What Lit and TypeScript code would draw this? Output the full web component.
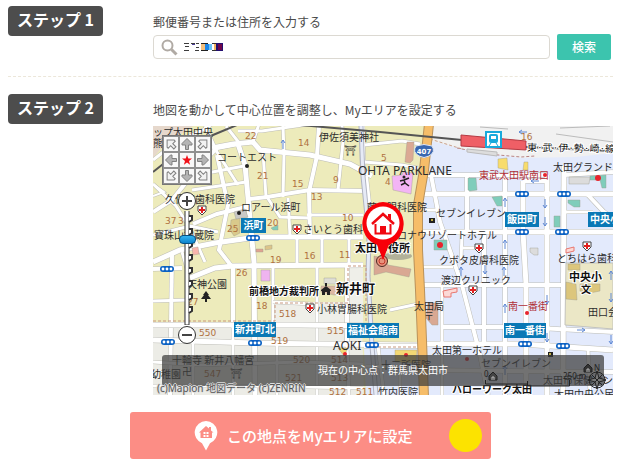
import { LitElement, html, svg, css } from "lit";
import { customElement, state } from "lit/decorators.js";

type Road = [string, number];
type Label = [string, number, number, string];

const YELLOW_ROADS: Road[] = [
  ["153,160 176,142 205,129 212,124", 3],
  ["153,212 172,200 200,165 217,148 238,144", 4],
  ["153,184 176,206 190,228 205,262", 3],
  ["153,196 164,192 153,184", 2],
  ["205,126 217,152 238,185", 3],
  ["226,126 240,144", 3],
  ["212,148 233,144 253,142 260,150 310,155 350,164 372,176", 5],
  ["253,142 259,124", 3],
  ["238,131 262,131 310,124", 3],
  ["238,144 245,165 250,219 254,262 255,395", 5],
  ["263,152 266,197", 3],
  ["250,199 267,197 310,190 367,191", 4],
  ["267,197 280,217 310,218", 3],
  ["283,126 284,155 283,197", 3],
  ["288,198 290,236", 3],
  ["193,224 217,214 250,206", 4],
  ["217,155 228,205 219,250 233,268 233,328", 4],
  ["202,174 244,166", 3],
  ["192,190 246,182", 3],
  ["153,262 180,250 215,243 257,237 310,237 363,237", 5],
  ["153,235 190,226 218,232", 3],
  ["153,269 182,268", 4],
  ["190,278 215,268 233,266 363,265", 5],
  ["182,252 188,272 186,322", 3],
  ["273,265 273,322", 3],
  ["297,237 297,265", 3],
  ["322,237 322,265", 3],
  ["349,237 349,265", 3],
  ["319,126 317,156 309,192 310,237", 4],
  ["317,265 317,395", 3],
  ["342,126 343,142 338,190", 3],
  ["307,215 363,215", 3],
  ["362,126 363,172", 5],
  ["364,145 402,141 420,144", 3],
  ["364,162 402,165 418,168", 3],
  ["366,176 372,230", 4],
  ["347,265 347,346", 4],
  ["153,301 188,300", 3],
  ["172,255 170,395", 4],
  ["390,310 418,304", 3],
];

const GRAY_ROADS: Road[] = [
  ["153,325 234,325 300,325 383,326", 5],
  ["153,340 255,343 320,344 420,345", 5],
  ["153,362 200,365 300,362 363,364", 3],
  ["153,386 250,386 363,388", 3],
  ["193,342 193,395", 3],
  ["233,325 233,395", 3],
  ["273,302 313,304", 3],
  ["277,345 277,395", 3],
  ["347,346 349,395", 3],
  ["372,346 380,395", 3],
];

const BLUE_ROADS: Road[] = [
  ["423,175 547,175", 4],
  ["564,175 613,172", 4],
  ["422,194 613,194", 5],
  ["418,232 613,232", 5],
  ["425,210 440,210", 3],
  ["423,267 453,267", 3],
  ["423,285 565,285", 4],
  ["442,327 520,327 613,332", 4],
  ["423,344 520,344 613,350", 5],
  ["424,370 613,372", 4],
  ["431,175 440,222 462,285 480,355 488,395", 4],
  ["442,285 442,395", 3],
  ["467,175 467,232", 4],
  ["462,232 461,262", 3],
  ["462,248 483,248", 3],
  ["484,232 484,344", 4],
  ["505,175 505,395", 4],
  ["523,181 523,232 526,284 526,395", 5],
  ["523,181 545,181", 4],
  ["547,175 547,395", 5],
  ["564,165 563,395", 5],
  ["587,194 604,212 613,218", 4],
  ["566,212 593,212", 3],
  ["588,348 590,395", 3],
];

const LABELS: Label[] = [
  ["ップ太田中央", 153, 136, "name"],
  ["熊", 153, 147, "name"],
  ["コートエスト", 217, 161, "name"],
  ["久保田歯科医院", 165, 203, "name"],
  ["ロアール浜町", 241, 211, "name"],
  ["寶珠山地蔵院", 154, 239, "name"],
  ["さいとう歯科", 303, 233, "name"],
  ["伊佐須美神社", 319, 141, "name"],
  ["⛩", 344, 154, "name"],
  ["OHTA PARKLANE", 358, 175, "latin"],
  ["藤川眼科医院", 367, 211, "name"],
  ["セブンイレブン", 436, 217, "name"],
  ["ロナウリゾートホテル", 397, 239, "name"],
  ["太田市役所", 355, 252, "hall"],
  ["クボタ皮膚科医院", 439, 264, "name"],
  ["太田グランド", 553, 171, "name"],
  ["東武太田駅南口", 479, 179, "red"],
  ["とちはら歯科", 557, 262, "name"],
  ["天神公園", 187, 288, "name"],
  ["前橋地方裁判所", 249, 295, "strong"],
  ["新井町", 336, 293, "town"],
  ["小林胃腸科医院", 317, 313, "name"],
  ["AOKI", 333, 350, "latin"],
  ["太田局", 414, 310, "name"],
  ["〒", 424, 320, "name"],
  ["渡辺クリニック", 441, 284, "name"],
  ["太田第一ホテル", 432, 354, "name"],
  ["南一番街", 508, 310, "red"],
  ["中央小", 569, 281, "hall"],
  ["文", 581, 293, "strong"],
  ["田口会", 588, 316, "name"],
  ["十輪寺 新井八幡宮", 172, 364, "name"],
  ["幼稚園", 151, 378, "name"],
  ["卍", 182, 375, "name"],
  ["⛩", 230, 377, "name"],
  ["十二所医院", 381, 369, "name"],
  ["竹内医院", 378, 396, "name"],
  ["ハローワーク太田", 452, 393, "strong"],
  ["セブンイレブン", 481, 367, "name"],
  ["太田市保健セン", 543, 384, "name"],
  ["太田中央公民", 554, 398, "name"],
  ["22", 245, 139, "lot"],
  ["14", 298, 146, "lot"],
  ["21", 257, 179, "lot"],
  ["15", 292, 187, "lot"],
  ["37", 165, 224, "lot"],
  ["3", 178, 224, "lot"],
  ["25", 227, 232, "lot"],
  ["20", 267, 226, "lot"],
  ["19", 270, 263, "lot"],
  ["16", 304, 259, "lot"],
  ["11", 339, 258, "lot"],
  ["5", 381, 161, "lot"],
  ["9", 333, 183, "lot"],
  ["4", 385, 185, "lot"],
  ["13", 311, 200, "lot"],
  ["10", 342, 221, "lot"],
  ["26", 236, 276, "lot"],
  ["27", 187, 305, "lot"],
  ["18", 256, 309, "lot"],
  ["518", 279, 317, "lot"],
  ["550", 199, 336, "lot"],
  ["519", 271, 344, "lot"],
  ["515", 327, 334, "lot"],
  ["547", 204, 377, "lot"],
  ["520", 293, 363, "lot"],
  ["521", 285, 381, "lot"],
  ["514", 331, 363, "lot"],
  ["513", 331, 381, "lot"],
  ["512", 329, 395, "lot"],
  ["511", 356, 395, "lot"],
  ["16", 521, 140, "lot"],
];

const SIGNS: [string, number, number, number][] = [
  ["浜町", 241, 218, 25],
  ["飯田町", 505, 212, 34],
  ["中央小", 588, 212, 34],
  ["新井町北", 234, 322, 42],
  ["福祉会館南", 347, 323, 52],
  ["南一番街", 504, 323, 42],
];

const SIGNALS: [number, number][] = [
  [253, 238], [522, 194], [564, 194], [522, 232], [562, 232], [167, 269],
  [168, 342], [255, 343], [372, 345], [525, 344], [563, 346],
];

const CLINICS: [number, number][] = [
  [202, 210], [297, 229], [479, 248], [587, 246], [310, 308], [473, 290],
];

const BUILDINGS: [string, string][] = [
  ["392,176 402,175 403,172 413,173 411,194 393,190", "#f3b5f5"],
  ["407,142 414,142 413,160 410,163 405,162", "#dba994"],
  ["261,270 270,270 270,281 261,281", "#efb4f0"],
  ["374,256 384,258 388,265 411,269 409,277 386,272 374,275", "#d9a893"],
  ["428,303 438,303 438,325 432,325 426,318", "#d9a893"],
  ["395,350 417,350 416,363 395,362", "#f3d874"],
  ["338,348 348,348 344,356", "#f3d874"],
  ["468,178 476,178 477,190 470,191 468,190", "#7fcdbb"],
  ["492,197 502,196 502,206 497,206", "#7fcdbb"],
  ["568,200 580,200 580,207 574,207 568,203", "#7fcdbb"],
  ["554,216 560,216 560,227 554,227", "#7fcdbb"],
  ["590,176 606,175 606,188 602,188 600,180 590,180", "#7fcdbb"],
  ["434,240 447,240 447,250 434,250", "#7fcdbb"],
  ["271,228 278,225 278,230 273,230", "#7fcdbb"],
  ["498,159 507,158 508,170 498,168", "#f8dc6c"],
  ["524,162 528,162 528,170 523,170", "#f8dc6c"],
  ["568,264 580,264 580,270 568,270", "#dcc67c"],
  ["566,282 576,284 577,300 566,299", "#dcc67c"],
  ["580,284 600,284 600,291 590,293 580,291", "#dcc67c"],
  ["231,220 240,218 240,233 234,236 230,230", "#d9c98b"],
  ["234,212 245,209 248,217 236,219", "#c9c9c6"],
  ["569,177 590,177 589,184 569,184", "#dcdcdc"],
  ["530,248 538,248 538,255 534,255 530,252", "#dcdcdc"],
  ["324,278 336,278 336,284 324,284", "#deddd5"],
  ["321,286 345,286 345,293 334,295 321,292", "#ddb8a2"],
  ["192,248 198,247 199,254 193,255", "#f8b5ac"],
  ["256,249 263,249 263,252 256,252", "#e0a390"],
  ["265,246 272,245 272,249 265,250", "#dcc58a"],
];

const FLOW_ARROWS: [number, number, number][] = [
  [505, 202, 1], [505, 244, 1], [545, 204, -1], [545, 222, -1], [283, 144, 1],
  [505, 308, 1], [547, 300, -1], [504, 271, 1], [485, 270, -1], [547, 338, -1],
  [611, 275, 1], [611, 298, -1], [611, 340, -1], [461, 271, 1], [505, 370, 1],
];

const roads = (list: Road[]) => svg`
  ${list.map(([p, w]) => svg`<polyline points=${p} fill="none" stroke="#bdbdb6" stroke-width=${w + 1}/>`)}
  ${list.map(([p, w]) => svg`<polyline points=${p} fill="none" stroke="#fff" stroke-width=${w}/>`)}`;

const mapDrawing = html`
  <svg class="map-drawing" viewBox="153 126 460 269" role="img" aria-label="地図">
    <rect x="153" y="126" width="460" height="269" fill="#edebbb"/>
    <path d="M153 126h40l-30 20-10 12z" fill="#e6d8cc"/>
    <path d="M153 322h209l2 73H153z" fill="#ecece6"/>
    <path d="M273 302h90v22h-90zM348 266h15v60h-15z" fill="#efefe9"/>
    ${roads(YELLOW_ROADS)}
    ${roads(GRAY_ROADS)}
    <path d="M430 126H613V395H423L419 262z" fill="#e3eafc"/>
    <path d="M364 348h58v47h-56z" fill="#e3eafc"/>
    <path d="M430 126H613V153L575 157 520 158 466 150 428 140z" fill="#f1f1f1"/>
    ${roads(BLUE_ROADS)}
    ${roads([["364,346 422,346", 4], ["366,366 420,368", 3], ["378,346 384,395", 3], ["400,366 400,395", 3]])}
    <path d="M566 263h47v66l-48-4z" fill="#ebe7c6" stroke="#c3c3bd"/>
    <path d="M361 126l2 50 6 60-1 40 4 70 4 49" fill="none" stroke="#b0b4c2" stroke-width="5"/>
    <path d="M361 126l2 50 6 60-1 40 4 70 4 49" fill="none" stroke="#e6eaf6" stroke-width="3"/>
    <path d="M153 321H275V303h73V266h18v60M378 347h42" fill="none" stroke="#c9987f" stroke-dasharray="3 2"/>
    <path d="M457 148l30 6 34 3 14-1" fill="none" stroke="#b98484" stroke-dasharray="3 2"/>
    <path d="M430 139l32 10" fill="none" stroke="#c9a08a" stroke-dasharray="3 2"/>
    ${BUILDINGS.map(([p, c]) => svg`<polygon points=${p} fill=${c} stroke="#9a9a8c" stroke-opacity=".4"/>`)}
    <path d="M429 124L424 170 418 205 418 250 420 290 422 340 424 397" fill="none" stroke="#b9925c" stroke-width="10"/>
    <path d="M429 124L424 170 418 205 418 250 420 290 422 340 424 397" fill="none" stroke="#f6bd69" stroke-width="8"/>
    <path d="M153 172L177 153 213 135 237 125M300 125L380 132 462 140" fill="none" stroke="#555" stroke-width="2"/>
    <path d="M526 147L613 151" fill="none" stroke="#555" stroke-width="2"/>
    <path d="M461 135L526 141V150L461 146z" fill="#ef5f66" stroke="#b33a42"/>
    <path d="M467 149l30 3v4l-30-4zM560 128l50-2M556 134l57 8M480 127l28 2" fill="#ddd" stroke="#bbb"/>
    <g>
      <rect x="486" y="132" width="15" height="15" fill="#fff" stroke="#19a9db" stroke-width="2"/>
      <rect x="489" y="134" width="9" height="9" rx="2" fill="#19a9db"/>
      <path d="M491 136h5v3h-5z" fill="#fff"/>
      <path d="M491 143l-2 3M496 143l2 3" stroke="#19a9db"/>
    </g>
    ${FLOW_ARROWS.map(([x, y, d]) => svg`<path d=${`M${x} ${y + 5 * d}V${y - 4 * d}M${x - 2} ${y - d}L${x} ${y - 4 * d}L${x + 2} ${y - d}`} fill="none" stroke="#5f88d4"/>`)}
    <path d="M539 181h-8m3-2l-3 2 3 2M577 330h8m-3-2l3 2-3 2M527 132h-8m3-2l-3 2 3 2" fill="none" stroke="#5f88d4"/>
    <path d="M443 291l14-3v4l-6 1v4h-7z" fill="#fbd9d6" stroke="#e8776f"/>
    <path d="M566 249l8-2v4l-8 2z" fill="#fbd9d6" stroke="#e8776f"/>
    <ellipse cx="398" cy="256" rx="14" ry="4" fill="#777" opacity=".5"/>
    ${LABELS.map(([t, x, y, c]) => svg`<text class=${c} x=${x} y=${y}>${t}</text>`)}
    <text class="line-name" x="527" y="151" transform="rotate(1 527 151)">東·武·伊·勢·崎·線</text>
    ${SIGNS.map(([t, x, y, w]) => svg`
      <rect x=${x} y=${y} width=${w} height="15" fill="#0a78b5"/>
      <text class="sign" x=${x + w / 2} y=${y + 11}>${t}</text>`)}
    ${SIGNALS.map(([x, y]) => svg`
      <rect x=${x - 7} y=${y - 3} width="14" height="6" rx="3" fill="#0b62c4"/>
      ${[-4, 0, 4].map((d) => svg`<circle cx=${x + d} cy=${y} r="1.4" fill="#fff"/>`)}`)}
    ${CLINICS.map(([x, y]) => svg`
      <path d=${`M${x - 4} ${y - 4}h8v5l-4 4-4-4z`} fill="#fff" stroke="#444"/>
      <path d=${`M${x - 3} ${y}h6M${x} ${y - 3}v6`} stroke="#e02020" stroke-width="2"/>`)}
    <g>
      <path d="M416 146q8-3 16 0 4 6-3 10-5 3-10 0-7-4-3-10z" fill="#3a68b0" stroke="#dfe6f4"/>
      <text class="route" x="424" y="154">407</text>
    </g>
    <g fill="#222">
      <circle cx="247" cy="166" r="2"/><circle cx="239" cy="213" r="2"/>
      <path d="M206 291l3 4h-1l3 4h-4v3h-2v-3h-4l3-4h-1z"/>
      <path d="M321 290l5-4 5 4v1h-1v4h-3v-3h-2v3h-3v-4h-1zM325 283h2v3h-2z"/>
      <circle cx="404" cy="177" r="1.5"/>
      <path d="M400 181l4-1 5-2M404 180l1 3 4 3M405 183l-4 2" fill="none" stroke="#222" stroke-width="1.5"/>
      <path d="M429 218h6v5h-6zM548 352h5v5h-5z"/>
    </g>
    <g fill="#f6df55"><circle cx="432" cy="220" r="1"/><circle cx="550" cy="354" r="1"/></g>
    <g fill="#e8242c">
      <circle cx="440" cy="245" r="3"/><circle cx="598" cy="178" r="3"/><circle cx="545" cy="175" r="2"/>
      <circle cx="345" cy="354" r="2"/><circle cx="406" cy="355" r="2"/><circle cx="527" cy="313" r="2"/>
      <circle cx="467" cy="359" r="2"/>
    </g>
    <circle cx="382" cy="261" r="5.500" fill="#e8927c" stroke="#4a2a24"/>
    <circle cx="382" cy="261" r="3" fill="none" stroke="#c2372a"/>
  </svg>`;

const ARROW_TURNS = [-45, 0, 45, -90, null, 90, -135, 180, 135];
const ARROW_NAMES = ["北西", "北", "北東", "西", "中心", "東", "南西", "南", "南東"];

@customElement("app-root")
export class AppRoot extends LitElement {
  @state() private zoom = 77;

  static styles = css`
    :host {
      display: block;
      padding: 6px 12px 8px 8px;
      background: #fff;
      color: #4a4a4a;
      font: 12px/16px "Noto Sans CJK JP", "Noto Sans", sans-serif;
    }
    * { box-sizing: border-box; }
    button, input { font: inherit; margin: 0; }
    button { border: 0; padding: 0; cursor: pointer; }
    .step { display: grid; grid-template-columns: 95px minmax(0, 1fr); column-gap: 50px; align-items: start; }
    .step + .step { margin-top: 17px; }
    .first { padding-bottom: 16px; border-bottom: 1px dashed #ece7da; }
    .badge {
      margin: 0; height: 30px; border-radius: 4px; background: #4d4d4d; color: #fff;
      font-size: 16px; line-height: 27px; font-weight: 700; text-align: center;
    }
    .body { display: flex; flex-direction: column; padding-top: 8px; }
    .caption { display: block; margin: 0; }
    .search { display: flex; align-items: center; gap: 7px; margin-top: 4px; padding-right: 2px; }
    .field {
      display: flex; flex: 1; align-items: center; gap: 6px; height: 24px; padding: 0 7px;
      border: 1px solid #dcd9d2; border-radius: 4px;
    }
    .field svg { flex: none; }
    .field input { flex: 1; min-width: 0; border: 0; outline: 0; background: none; }
    .submit {
      width: 54px; height: 26px; border-radius: 2px; background: #3cc4ae; color: #fff;
      line-height: 24px; font-weight: 500;
    }
    .map { position: relative; overflow: hidden; margin-top: 8px; }
    .map-drawing { display: block; width: 100%; }
    .map-drawing text { fill: #2c2c2c; font-size: 10px; }
    .map-drawing .latin { font-family: "Noto Sans", sans-serif; font-size: 12px; }
    .map-drawing .strong, .map-drawing .hall, .map-drawing .town, .map-drawing .line-name {
      fill: #111; font-weight: 700; stroke: #fff; stroke-width: 2px; paint-order: stroke;
    }
    .map-drawing .line-name { font-weight: 400; }
    .map-drawing .hall { font-size: 11px; }
    .map-drawing .town { font-size: 13px; }
    .map-drawing .red { fill: #b03038; }
    .map-drawing .lot { fill: #b0713f; font: 9px "DejaVu Sans", sans-serif; }
    .map-drawing .sign { fill: #fff; font-weight: 700; text-anchor: middle; }
    .map-drawing .route { fill: #fff; font: bold 7px "DejaVu Sans", sans-serif; text-anchor: middle; }
    .pan {
      position: absolute; left: 9px; top: 9px; display: grid;
      grid-template-columns: repeat(3, 16px); grid-auto-rows: 16px;
      border: 1px solid #777; background: #777;
    }
    .pan button { display: grid; place-items: center; border: 1px solid #909090; background: #f8f8f8; }
    .zoomer { position: absolute; left: 24px; top: 65px; display: flex; flex-direction: column; align-items: center; }
    .zoomer button { width: 20px; height: 20px; border-radius: 50%; background: none; }
    .zoomer svg { display: block; }
    .track { position: relative; width: 20px; height: 114px; }
    .track input {
      position: absolute; inset: 0; width: 20px; height: 114px; appearance: none;
      writing-mode: vertical-lr; direction: rtl; background: none;
    }
    .track input::-webkit-slider-thumb {
      appearance: none; width: 17px; height: 9px; border: 1px solid #064f80; border-radius: 4px;
      background: linear-gradient(#35b4f0, #0d83cc);
    }
    .pin { position: absolute; left: 50%; top: 75px; margin-left: -22px; }
    .center-point {
      position: absolute; left: 9px; right: 9px; bottom: 9px; height: 31px; border-radius: 3px; margin: 0;
      background: rgba(60, 60, 60, 0.72); color: #fff; font-size: 10px; line-height: 29px; text-align: center;
    }
    .credit {
      position: absolute; left: 4px; bottom: 0; margin: 0; color: #555; font-size: 10px; line-height: 14px;
      font-family: "Noto Sans", "Noto Sans CJK JP", sans-serif;
      text-shadow: 1px 0 #ddd, -1px 0 #ddd, 0 1px #ddd, 0 -1px #ddd;
    }
    .scale { position: absolute; right: 4px; bottom: 4px; }
    .scale text { font: 8px "Noto Sans", sans-serif; fill: #222; }
    .confirm {
      display: flex; align-items: center; width: 361px; max-width: 100%; height: 47px;
      margin: 17px auto 0; padding: 0 9px 0 64px; border-radius: 3px; background: #fc8d85; color: #fff;
      font-size: 15px; font-weight: 500; gap: 9px; text-align: left;
    }
    .confirm span { flex: 1; white-space: nowrap; }
  `;

  private arrow(turn: number | null) {
    if (turn === null)
      return html`<svg width="14" height="14" viewBox="0 0 14 14"><path d="M7 2l1.300 3.600H12L9 8l1.100 3.800L7 9.500l-3.100 2.300L5 8 2 5.600h3.700z" fill="#f01018"/></svg>`;
    const diagonal = Math.abs(turn) % 90 === 45;
    return html`<svg width="14" height="14" viewBox="0 0 14 14">
      <path transform="rotate(${turn} 7 7)" d="M7 1.500L2 6.500v1.500h3.500v4.500h3V8H12V6.500z"
        fill=${diagonal ? "#f2f2f2" : "#b4b4b4"} stroke="#808080"/></svg>`;
  }

  render() {
    return html`
      <section class="step first">
        <h2 class="badge">ステップ 1</h2>
        <div class="body">
          <label class="caption" for="address">郵便番号または住所を入力する</label>
          <div class="search">
            <div class="field">
              <svg width="17" height="17" viewBox="0 0 17 17" fill="none" stroke="#b0aaa4">
                <circle cx="6.500" cy="6.500" r="5" stroke-width="2"/>
                <path d="M10.500 10.500l5 5" stroke-width="3"/>
              </svg>
              <svg width="40" height="9" viewBox="0 0 40 9" shape-rendering="crispEdges" aria-hidden="true">
                <path d="M0 0h5v1H0zM1 3h4v1H1zM0 7h5v1H0zM7 0h4v1H7zM12 0h3v1h-3zM12 4h3v1h-3zM11 7h4v1h-4z" fill="#3c3c3c"/>
                <path d="M8 1h3v1H8z" fill="#4b3b9c"/>
                <path d="M17 0h5v8h-5z" fill="#f6c07c"/><path d="M17 0h7v1h-7zM17 7h7v1h-7z" fill="#222"/>
                <path d="M21 1h4v6h-4z" fill="#1d86e8"/><path d="M25 1h3v6h-3z" fill="#6cc4f8"/>
                <path d="M28 0h4v1h-4zM28 7h4v1h-4z" fill="#333"/><path d="M30 1h2v6h-2z" fill="#f4b45c"/>
                <path d="M32 0h7v8h-7z" fill="#241070"/><path d="M34 1h4v6h-4z" fill="#70064c"/>
              </svg>
              <input id="address" type="text">
            </div>
            <button class="submit" type="button">検索</button>
          </div>
        </div>
      </section>

      <section class="step">
        <h2 class="badge">ステップ 2</h2>
        <div class="body">
          <p class="caption">地図を動かして中心位置を調整し、Myエリアを設定する</p>
          <div class="map">
            ${mapDrawing}
            <div class="pan">
              ${ARROW_TURNS.map((t, i) => html`<button type="button" aria-label=${ARROW_NAMES[i]}>${this.arrow(t)}</button>`)}
            </div>
            <div class="zoomer">
              <button type="button" aria-label="拡大" @click=${() => (this.zoom = Math.min(100, this.zoom + 10))}>
                <svg width="20" height="20"><circle cx="10" cy="10" r="8.500" fill="#fff" stroke="#333"/><path d="M5 10h10M10 5v10" stroke="#444" stroke-width="2"/></svg>
              </button>
              <div class="track">
                <svg width="20" height="114">
                  <path d="M8 0v114h4V0" fill="#fff" stroke="#333"/>
                  ${[5, 18, 31, 44, 57, 70, 83, 96].map((y) => svg`<path d=${`M12 ${y}h3v4l-3 2`} fill="#fff" stroke="#333" stroke-width="2"/>`)}
                </svg>
                <input type="range" aria-label="縮尺" .value=${String(this.zoom)}>
              </div>
              <button type="button" aria-label="縮小" @click=${() => (this.zoom = Math.max(0, this.zoom - 10))}>
                <svg width="20" height="20"><circle cx="10" cy="10" r="8.500" fill="#fff" stroke="#333"/><path d="M5 10h10" stroke="#444" stroke-width="2"/></svg>
              </button>
            </div>
            <svg class="pin" width="44" height="60" viewBox="0 0 44 60">
              <path d="M22 1a22 22 0 0 0-6 42.700L22 59l6-15.300A22 22 0 0 0 22 1z" fill="#f80008"/>
              <circle cx="22" cy="22" r="16.500" fill="#fff"/>
              <path d="M11 23L22 13l11 10" fill="none" stroke="#f00810" stroke-width="2.500"/>
              <path d="M27 13h3v6l-3-3z" fill="#f00810"/>
              <path d="M14.500 23v9.500h15V23" fill="none" stroke="#f00810" stroke-width="2"/>
              <path d="M19 25h6v8h-6z" fill="#f00810"/>
            </svg>
            <p class="center-point">現在の中心点：群馬県太田市</p>
            <p class="credit">(c)Mapion 地図データ (c)ZENRIN</p>
            <svg class="scale" width="126" height="34" viewBox="0 0 126 34" fill="none" stroke="#222">
              <path d="M2.500 23v4h42v2h42v-6M44.500 24v4"/>
              <text x="1" y="20" stroke="none">0</text>
              <text x="80" y="22" stroke="none">250 m</text>
              <path d="M6 19l4-4 4 4v4H6z" fill="#444"/>
              <path d="M9 23v-3h2v3" stroke="#bbb"/>
              <path d="M101 11l4-4 4 4v4h-8z" fill="#333"/>
              <path d="M104 15v-3h2v3" stroke="#bbb"/>
              <text x="111" y="14" stroke="none">N</text>
              <circle cx="114" cy="23" r="8"/>
              <path d="M114 14l2 7 7 2-7 2-2 7-2-7-7-2 7-2z" fill="#777"/>
              <path d="M109 18l10 10M119 18l-10 10"/>
            </svg>
          </div>
        </div>
      </section>

      <button class="confirm" type="button">
        <svg width="24" height="31" viewBox="0 0 24 31">
          <path d="M12 1a11.500 11.500 0 0 0-4 22.200L12 30.500l4-7.300A11.500 11.500 0 0 0 12 1z" fill="#fff"/>
          <path d="M5 12.500L12 6l3 2.500V7h2v3.500l2.500 2H18V18H6.500v-5.500z" fill="#fc8d85"/>
          <path d="M9.500 12h2v2h-2zM12.500 12h2v2h-2zM9.500 15h2v2h-2zM12.500 15h2v2h-2z" fill="#fff"/>
        </svg>
        <span>この地点をMyエリアに設定</span>
        <svg width="33" height="33" viewBox="0 0 33 33"><circle cx="16.500" cy="16.500" r="16.500" fill="#fce300"/></svg>
      </button>
    `;
  }
}
